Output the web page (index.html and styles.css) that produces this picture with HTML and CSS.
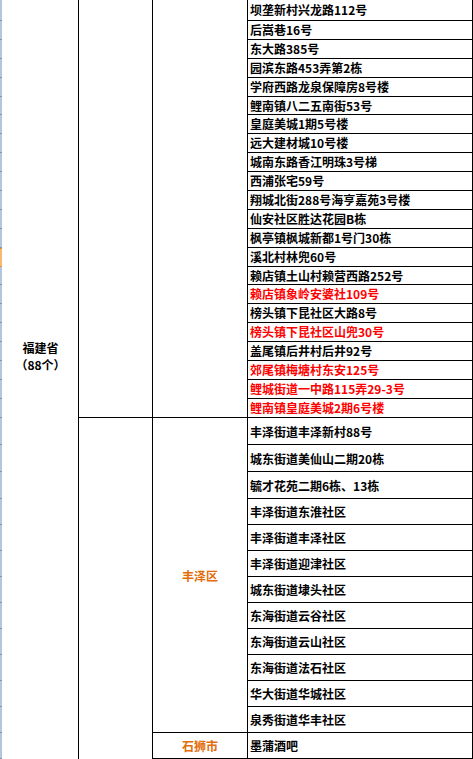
FILE: index.html
```html
<!DOCTYPE html>
<html lang="zh-CN">
<head>
<meta charset="utf-8">
<title>福建省</title>
<link rel="stylesheet" href="styles.css">
</head>
<body>
<div class="sheet">
  <div class="prov"><span class="prov-line">福建省</span><span class="prov-line">（88个）</span></div>
  <div class="city city-top"></div>
  <div class="city city-bottom"></div>
  <div class="dist dist-top"></div>
  <div class="dist dist-fz">丰泽区</div>
  <div class="dist dist-ss">石狮市</div>

  <div class="hd"></div><div class="addr">坝垄新村兴龙路112号</div>
  <div class="hd"></div><div class="addr">后嵩巷16号</div>
  <div class="hd"></div><div class="addr">东大路385号</div>
  <div class="hd"></div><div class="addr">园滨东路453弄第2栋</div>
  <div class="hd"></div><div class="addr">学府西路龙泉保障房8号楼</div>
  <div class="hd"></div><div class="addr">鲤南镇八二五南街53号</div>
  <div class="hd"></div><div class="addr">皇庭美城1期5号楼</div>
  <div class="hd"></div><div class="addr">远大建材城10号楼</div>
  <div class="hd"></div><div class="addr">城南东路香江明珠3号梯</div>
  <div class="hd"></div><div class="addr">西浦张宅59号</div>
  <div class="hd"></div><div class="addr">翔城北街288号海亨嘉苑3号楼</div>
  <div class="hd"></div><div class="addr">仙安社区胜达花园B栋</div>
  <div class="hd"></div><div class="addr">枫亭镇枫城新都1号门30栋</div>
  <div class="hd sel"></div><div class="addr">溪北村林兜60号</div>
  <div class="hd"></div><div class="addr">赖店镇土山村赖营西路252号</div>
  <div class="hd"></div><div class="addr red">赖店镇象岭安婆社109号</div>
  <div class="hd"></div><div class="addr">榜头镇下昆社区大路8号</div>
  <div class="hd"></div><div class="addr red">榜头镇下昆社区山兜30号</div>
  <div class="hd"></div><div class="addr">盖尾镇后井村后井92号</div>
  <div class="hd"></div><div class="addr red">郊尾镇梅塘村东安125号</div>
  <div class="hd"></div><div class="addr red">鲤城街道一中路115弄29-3号</div>
  <div class="hd"></div><div class="addr red">鲤南镇皇庭美城2期6号楼</div>

  <div class="hd"></div><div class="addr tall">丰泽街道丰泽新村88号</div>
  <div class="hd"></div><div class="addr tall">城东街道美仙山二期20栋</div>
  <div class="hd"></div><div class="addr tall">毓才花苑二期6栋、13栋</div>
  <div class="hd"></div><div class="addr tall">丰泽街道东淮社区</div>
  <div class="hd"></div><div class="addr tall">丰泽街道丰泽社区</div>
  <div class="hd"></div><div class="addr tall">丰泽街道迎津社区</div>
  <div class="hd"></div><div class="addr tall">城东街道埭头社区</div>
  <div class="hd"></div><div class="addr tall">东海街道云谷社区</div>
  <div class="hd"></div><div class="addr tall">东海街道云山社区</div>
  <div class="hd"></div><div class="addr tall">东海街道法石社区</div>
  <div class="hd"></div><div class="addr tall">华大街道华城社区</div>
  <div class="hd"></div><div class="addr tall">泉秀街道华丰社区</div>
  <div class="hd"></div><div class="addr tall">墨蒲酒吧</div>
</div>
</body>
</html>
```
FILE: styles.css
```css
html, body {
  margin: 0;
  padding: 0;
  background: #ffffff;
  overflow: hidden;
}

.sheet {
  width: 473px;
  height: 759px;
  display: grid;
  grid-template-columns: 2px 76px 74px 95px 226px;
  grid-template-rows: 21px repeat(21, 18.905px) repeat(3, 27px) repeat(10, 26px);
  font-family: "Noto Sans CJK SC", "Noto Sans", sans-serif;
  font-weight: 700;
  font-size: 12px;
  line-height: 14px;
  color: #000000;
}

.sheet > div {
  box-sizing: border-box;
  min-width: 0;
  min-height: 0;
}

.hd {
  grid-column: 1;
  background: #b4c6de;
  border-bottom: 1px solid #8396b3;
}

.hd.sel {
  background: #f6bb72;
  border-top: 1px solid #e38f2e;
  border-bottom: 1px solid #e38f2e;
}

.prov {
  grid-column: 2;
  grid-row: 1 / -1;
  display: flex;
  flex-direction: column;
  align-items: center;
  padding-top: 339px;
  padding-left: 1px;
}

.prov-line {
  display: block;
  line-height: 17px;
}

.city {
  grid-column: 3;
  border-left: 1px solid #000;
}

.city-top {
  grid-row: 1 / 23;
  border-bottom: 1px solid #000;
}

.city-bottom {
  grid-row: 23 / -1;
}

.dist {
  grid-column: 4;
  border-left: 1px solid #000;
  border-bottom: 1px solid #000;
  display: flex;
  align-items: center;
  justify-content: center;
  color: #e46c0a;
  padding-top: 2px;
}

.dist-top {
  grid-row: 1 / 23;
}

.dist-fz {
  grid-row: 23 / 35;
}

.dist-ss {
  grid-row: 35;
}

.addr {
  grid-column: 5;
  border-left: 1px solid #000;
  border-right: 1px solid #000;
  border-bottom: 1px solid #000;
  padding-left: 2px;
  display: flex;
  align-items: center;
  white-space: nowrap;
  overflow: hidden;
}

.addr.tall {
  padding-top: 2px;
}

.red {
  color: #ff0000;
}
```
